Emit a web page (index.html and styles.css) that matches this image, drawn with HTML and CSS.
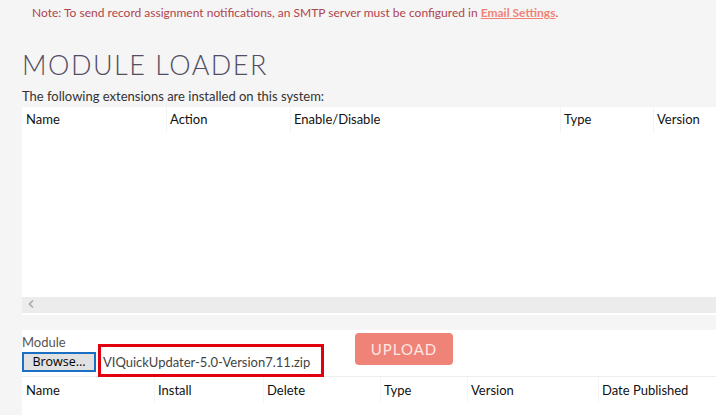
FILE: index.html
```html
<!DOCTYPE html>
<html lang="en">
<head>
    <meta charset="UTF-8">
    <meta name="viewport" content="width=device-width, initial-scale=1.0">
    <title>Module Loader</title>
    <link rel="stylesheet" href="styles.css">
</head>
<body>
<div class="page">
    <p class="note">Note: To send record assignment notifications, an SMTP server must be configured in <a href="#">Email Settings</a>.</p>

    <h1 class="title">MODULE LOADER</h1>
    <p class="intro">The following extensions are installed on this system:</p>

    <!-- Установленные расширения -->
    <div class="grid">
        <div class="grid-head">
            <div class="cell c-name">Name</div>
            <div class="cell c-action">Action</div>
            <div class="cell c-enable">Enable/Disable</div>
            <div class="cell c-type">Type</div>
            <div class="cell c-version">Version</div>
        </div>
    </div>
    <div class="hscroll">
        <svg class="arrow" width="12" height="16" viewBox="0 0 12 16"><polyline points="9,3.5 5.5,7 9,10.5" fill="none" stroke="#a8a8a8" stroke-width="1.6"/></svg>
    </div>

    <!-- Загрузка модуля -->
    <div class="panel">
        <div class="upload-row">
            <div class="file-field">
                <label for="module">Module</label>
                <div class="file-line">
                    <span class="browse">Browse...</span>
                    <span class="file-name">VIQuickUpdater-5.0-Version7.11.zip</span>
                </div>
            </div>
            <button class="button-upload">UPLOAD</button>
        </div>
        <div class="mark"></div>

        <div class="grid-head grid-head2">
            <div class="cell d-name">Name</div>
            <div class="cell d-install">Install</div>
            <div class="cell d-delete">Delete</div>
            <div class="cell d-type">Type</div>
            <div class="cell d-version">Version</div>
            <div class="cell d-date">Date Published</div>
        </div>
    </div>
</div>
</body>
</html>
```

FILE: styles.css
```css
    body {
        margin: 0;
        background-color: #f5f5f5;
        font-family: Lato, "Open Sans", sans-serif;
        color: #333;
        overflow: hidden;
    }

    .page {
        padding-left: 22px;
    }

    .note {
        margin: 0;
        padding: 5px 0 0 10px;
        height: 20px;
        font-size: 12px;
        line-height: 15px;
        color: #b0444b;
    }
    .note a {
        color: #f08377;
        font-weight: bold;
        text-decoration: underline;
    }

    .title {
        margin: 0;
        padding-top: 23px;
        height: 60px;
        box-sizing: border-box;
        font-size: 27px;
        line-height: 34px;
        font-weight: 300;
        letter-spacing: 1.5px;
        color: #534d64;
    }

    .intro {
        margin: 0;
        height: 22px;
        font-size: 13px;
        line-height: 22px;
        color: #333;
    }

    /* Таблица расширений */
    .grid {
        background: #fff;
        height: 190px;
    }
    .grid-head {
        display: flex;
        height: 25px;
        font-size: 13px;
        line-height: 25px;
        color: #111;
    }
    .cell {
        padding-left: 3px;
        box-sizing: border-box;
        border-left: 1px solid #f3f3f3;
        white-space: nowrap;
    }
    .cell:first-child {
        border-left: none;
        padding-left: 4px;
    }
    .c-name { width: 144px; }
    .c-action { width: 124px; }
    .c-enable { width: 270px; }
    .c-type { width: 93px; }
    .c-version { flex: 1; }

    .hscroll {
        height: 16px;
        background: #ececec;
        border-bottom: 2px solid #fff;
        margin-bottom: 15px;
    }
    .hscroll .arrow {
        display: block;
        margin-left: 2px;
    }

    /* Блок загрузки */
    .panel {
        background: #fff;
        height: 100px;
        position: relative;
    }
    .upload-row {
        display: flex;
        align-items: flex-start;
        height: 46px;
        border-bottom: 1px solid #eee;
    }
    .file-field {
        width: 333px;
    }
    .file-field label {
        display: block;
        padding-top: 4px;
        height: 18px;
        font-size: 13px;
        line-height: 16px;
        color: #555;
    }
    .file-line {
        display: flex;
        align-items: center;
    }
    .browse {
        display: inline-block;
        width: 74px;
        height: 20px;
        box-sizing: border-box;
        border: 2px solid #1b6fc2;
        background: #e1e1e1;
        font-family: "Open Sans", sans-serif;
        font-size: 12.5px;
        line-height: 15px;
        text-align: center;
        color: #000;
    }
    .file-name {
        padding-left: 7px;
        font-size: 13px;
        color: #444;
    }
    .button-upload {
        margin-top: 3px;
        width: 98px;
        height: 32px;
        border: none;
        border-radius: 4px;
        background-color: #f08377;
        color: #fde8e5;
        font-family: Lato, sans-serif;
        font-size: 15px;
        letter-spacing: 1px;
    }

    /* Красная рамка поверх имени файла */
    .mark {
        position: absolute;
        left: 76px;
        top: 14px;
        width: 226px;
        height: 33px;
        box-sizing: border-box;
        border: 3px solid #e2000f;
    }

    .grid-head2 .cell { border-left-color: #f5f5f5; }
    .grid-head2 { height: 26px; line-height: 26px; }
    .d-name { width: 132px; }
    .d-install { width: 109px; }
    .d-delete { width: 117px; }
    .d-type { width: 87px; }
    .d-version { width: 131px; }
    .d-date { flex: 1; }
```
